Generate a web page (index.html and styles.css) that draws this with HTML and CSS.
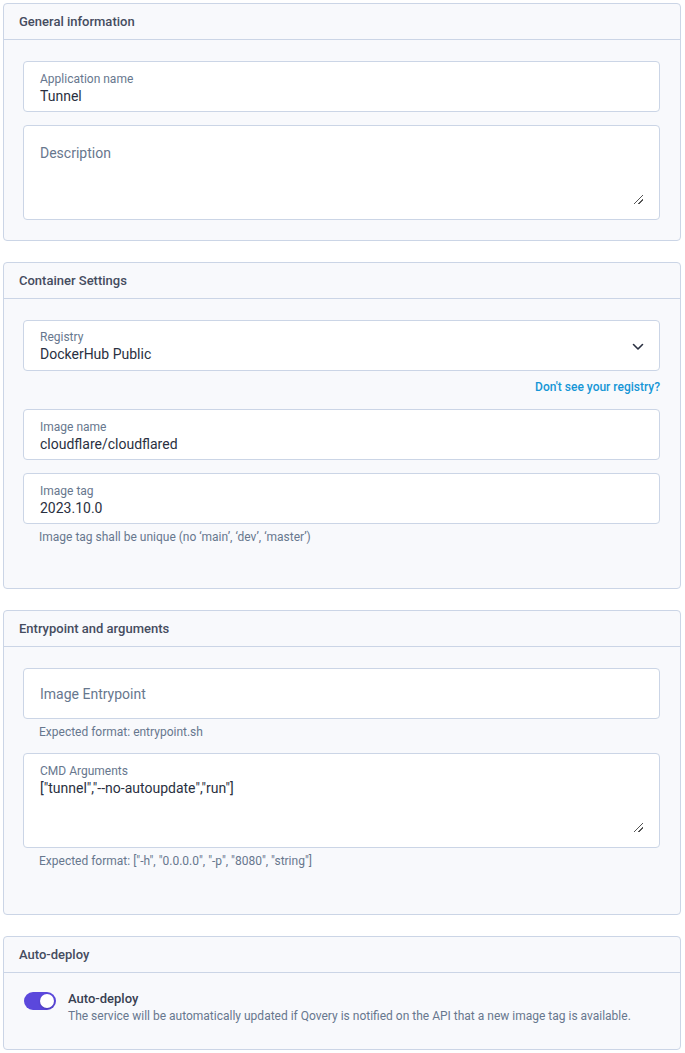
FILE: index.html
```html
<!DOCTYPE html>
<html>
<head>
<meta charset="utf-8">
<link rel="stylesheet" href="styles.css">
</head>
<body>
<div class="page">
  <section class="card">
    <div class="card-head">General information</div>
    <div class="card-body">
      <div class="field">
        <div class="label">Application name</div>
        <div class="value">Tunnel</div>
      </div>
      <div class="field area">
        <div class="placeholder">Description</div>
        <span class="grip"></span>
      </div>
    </div>
  </section>

  <section class="card">
    <div class="card-head">Container Settings</div>
    <div class="card-body body-c2">
      <div class="field select">
        <div>
          <div class="label">Registry</div>
          <div class="value">DockerHub Public</div>
        </div>
        <svg class="chev" width="12" height="8" viewBox="0 0 12 8"><path d="M1.5 1.5 L6 6 L10.5 1.5" fill="none" stroke="#2a3041" stroke-width="1.6" stroke-linecap="round" stroke-linejoin="round"/></svg>
      </div>
      <div class="link-row"><a class="link">Don't see your registry?</a></div>
      <div class="field">
        <div class="label">Image name</div>
        <div class="value">cloudflare/cloudflared</div>
      </div>
      <div class="group">
        <div class="field">
          <div class="label">Image tag</div>
          <div class="value">2023.10.0</div>
        </div>
        <div class="hint">Image tag shall be unique (no ‘main’, ‘dev’, ‘master’)</div>
      </div>
    </div>
  </section>

  <section class="card">
    <div class="card-head">Entrypoint and arguments</div>
    <div class="card-body body-c3">
      <div class="group">
        <div class="field">
          <div class="placeholder mid">Image Entrypoint</div>
        </div>
        <div class="hint">Expected format: entrypoint.sh</div>
      </div>
      <div class="group">
        <div class="field area">
          <div class="label">CMD Arguments</div>
          <div class="value">["tunnel","--no-autoupdate","run"]</div>
          <span class="grip"></span>
        </div>
        <div class="hint">Expected format: ["-h", "0.0.0.0", "-p", "8080", "string"]</div>
      </div>
    </div>
  </section>

  <section class="card">
    <div class="card-head">Auto-deploy</div>
    <div class="card-body toggle-body">
      <div class="toggle-row">
        <span class="toggle"><span class="knob"></span></span>
        <div>
          <div class="t-title">Auto-deploy</div>
          <div class="t-desc">The service will be automatically updated if Qovery is notified on the API that a new image tag is available.</div>
        </div>
      </div>
    </div>
  </section>
</div>
</body>
</html>
```

FILE: styles.css
```css
* { box-sizing: border-box; }
html, body { margin: 0; padding: 0; background: #ffffff; }
body {
  font-family: Roboto, "Noto Sans", "Liberation Sans", sans-serif;
  color: #2a3041;
}
.page {
  padding: 3px 4px 0 3px;
  display: flex;
  flex-direction: column;
  gap: 21px;
}
.card {
  background: #f8f9fc;
  border: 1px solid #cbd5e6;
  border-radius: 4px;
}
.card-head {
  height: 36px;
  border-bottom: 1px solid #cbd5e6;
  padding: 0 15px;
  display: flex;
  align-items: center;
  font-size: 13px;
  color: #454c5f;
  font-weight: 500;
}
.card-body {
  padding: 21px 20px 20px 19px;
  display: flex;
  flex-direction: column;
  gap: 13px;
}
.card-body.body-c2 { padding-bottom: 43px; }
.card-body.body-c3 { padding-bottom: 45px; }
.field {
  background: #ffffff;
  border: 1px solid #cbd5e6;
  border-radius: 4px;
  height: 51px;
  padding: 9px 16px 0 16px;
  position: relative;
}
.field.area { height: 95px; }
.field.select {
  display: flex;
  justify-content: space-between;
  align-items: center;
  padding-top: 0;
  padding-right: 15px;
}
.chev { margin-top: 2px; }
.label {
  font-size: 12px;
  color: #67778e;
  line-height: 16px;
}
.value {
  font-size: 14px;
  color: #2a3041;
  line-height: 18px;
}
.placeholder {
  font-size: 14px;
  color: #67778e;
  line-height: 18px;
  margin-top: 9px;
}
.placeholder.mid { margin-top: 7px; }
.grip {
  position: absolute;
  right: 16px;
  bottom: 15px;
  width: 9px;
  height: 9px;
  background: linear-gradient(135deg, transparent 0 45%, #555 45% 53%, transparent 53% 70%, #555 70% 78%, transparent 78%);
}
.link-row {
  display: flex;
  justify-content: flex-end;
  margin-top: -5px;
  margin-bottom: 1px;
}
.link {
  font-size: 12px;
  font-weight: 500;
  color: #1596d6;
  line-height: 16px;
}
.group { display: flex; flex-direction: column; gap: 5px; }
.hint {
  font-size: 12px;
  color: #67778e;
  padding-left: 16px;
  line-height: 16px;
}
.toggle-body { padding-top: 17px; padding-bottom: 24px; }
.toggle-row { display: flex; gap: 12px; align-items: flex-start; padding-left: 1px; }
.toggle {
  flex: none;
  width: 32px;
  height: 18px;
  border-radius: 9px;
  background: #5b48dc;
  position: relative;
  margin-top: 2px;
}
.knob {
  position: absolute;
  top: 2px;
  right: 2px;
  width: 14px;
  height: 14px;
  border-radius: 50%;
  background: #fff;
  box-shadow: 0 1px 2px rgba(0,0,0,0.2);
}
.t-title { font-size: 13px; color: #383f52; line-height: 18px; font-weight: 500; }
.t-desc { font-size: 12px; color: #67778e; line-height: 17px; }
```
